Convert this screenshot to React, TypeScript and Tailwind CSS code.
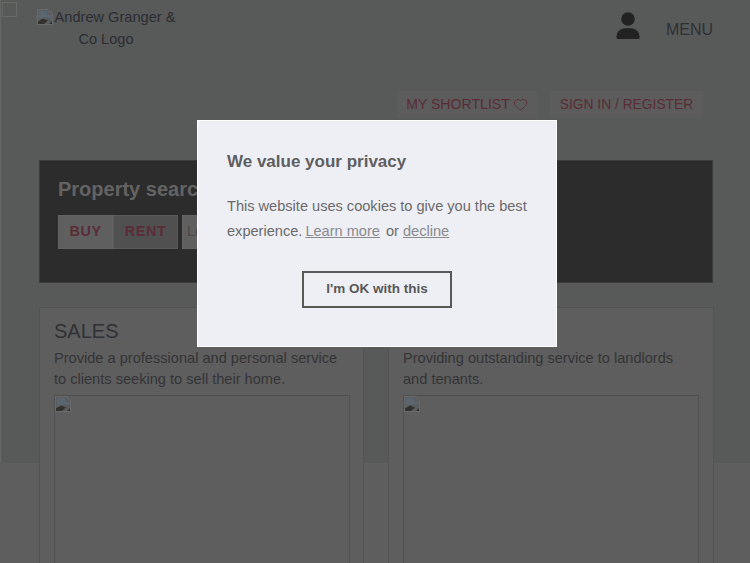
import { Heart } from 'lucide-react'

const font = { fontFamily: '"Liberation Sans", Arial, sans-serif' }

// Chrome's broken image placeholder
function BrokenImage() {
  return (
    <svg width="16" height="16" viewBox="0 0 16 16" className="block shrink-0">
      <path d="M0.5 0.5H11L15.5 5V15.5H0.5Z" fill="#5a5d60" stroke="#6a6a6c" />
      <path d="M2 2H10V6H14V9L9 8L2 10Z" fill="#5a6670" />
      <path d="M1 15V12.5L6 9.5L11 11.5L7 15Z" fill="#33312d" />
      <path d="M12 15L15 12V15Z" fill="#33312d" />
    </svg>
  )
}

function PersonIcon() {
  return (
    <svg width="24" height="27" viewBox="0 0 24 27" className="block">
      <circle cx="12" cy="7" r="6.8" fill="#222222" />
      <path d="M0.5 25C0.5 19 5 16 12 16C19 16 23.5 19 23.5 25C23.5 26.5 23 27 22 27H2C1 27 0.5 26.5 0.5 25Z" fill="#222222" />
    </svg>
  )
}

function ServiceCard({ title, text }: { title: string; text: string }) {
  return (
    <div className="h-[300px] border border-[#535353] bg-[#5e5e5e] px-[14px] pt-[10px]">
      <h2 className="text-[20px] leading-[26px] text-[#2f3135]">{title}</h2>
      <p className="mt-[4px] text-[14.6px] leading-[21px] text-[#343436]">{text}</p>
      <div className="mt-[5px] h-[200px] w-[296px] border border-[#505050]">
        <BrokenImage />
      </div>
    </div>
  )
}

export default function App() {
  return (
    <div
      className="relative h-[563px] w-[750px] overflow-hidden bg-[linear-gradient(#575a59_463px,#5e5e5e_463px)]"
      style={font}
    >
      <div className="h-[463px] w-px bg-[#666866]" />
      <div className="-mt-[463px] pl-[39px] pr-[37px]">
        {/* header */}
        <div className="flex h-[91px] items-start justify-between">
          <div className="-ml-[6px] mt-[6px] w-[146px] text-center text-[14.6px] leading-[22px] text-[#2c2d33]">
            <span className="mr-[2px] inline-block align-[-3px]">
              <BrokenImage />
            </span>
            Andrew Granger &amp; Co Logo
          </div>
          <div className="flex items-start">
            <div className="mr-[26px] mt-[12px]">
              <PersonIcon />
            </div>
            <div className="mt-[20px] text-[16px] leading-[20px] text-[#2f3036]">MENU</div>
          </div>
        </div>

        {/* account links */}
        <div className="flex h-[69px] items-start justify-end gap-[13px] pr-[10px]">
          <div className="flex h-[27px] w-[140px] items-center justify-center gap-[3px] bg-[#5c5c5c] text-[14.1px] text-[#5a2c36]">
            MY SHORTLIST <Heart size={15} strokeWidth={1.4} />
          </div>
          <div className="flex h-[27px] w-[153px] items-center justify-center bg-[#5c5c5c] pt-px text-[13.8px] text-[#5a2c36]">
            SIGN IN / REGISTER
          </div>
        </div>

        {/* search panel */}
        <div className="h-[123px] w-[674px] border border-[#3c3c3c] bg-[#2c2c2c] pl-[18px] pt-[16px]">
          <div className="text-[20px] font-bold leading-[24px] text-[#636363]">Property search</div>
          <div className="mt-[14px] flex h-[34px]">
            <div className="flex w-[55px] items-center justify-center border border-[#636363] bg-[#5f5f5f] text-[14.4px] font-bold tracking-[0.6px] text-[#5a2c36]">
              BUY
            </div>
            <div className="flex w-[65px] items-center justify-center border border-[#5a5a5a] bg-[#505050] text-[14.4px] font-bold tracking-[0.6px] text-[#5a2c36]">
              RENT
            </div>
            <div className="ml-[4px] flex w-[300px] items-center border border-[#636363] bg-[#5f5f5f] pl-[4px] text-[14.4px] text-[#504644]">
              Location
            </div>
          </div>
        </div>

        {/* service cards */}
        <div className="mt-[24px] grid w-[675px] grid-cols-[325px_326px] gap-[24px]">
          <ServiceCard title="SALES" text="Provide a professional and personal service to clients seeking to sell their home." />
          <ServiceCard title="LETTINGS" text="Providing outstanding service to landlords and tenants." />
        </div>
      </div>

      {/* checkbox left over in the corner */}
      <div className="absolute left-[2px] top-[2px] h-[15px] w-[15px] border border-[#686a68]" />

      {/* cookie dialog */}
      <div className="absolute left-[197px] top-[120px] h-[227px] w-[360px] border border-white bg-[#eeeff5] pl-[29px] pr-[25px] pt-[30px]">
        <h2 className="text-[17px] font-bold leading-[22px] text-[#5e5e5e]">We value your privacy</h2>
        <p className="mt-[21px] text-[14.6px] leading-[25px] tracking-[-0.01px] text-[#6a6a6a]">
          This website uses cookies to give you the best experience.{' '}
          <a className="-ml-[1px] text-[#8a8a8e] underline">Learn more</a>
          <span className="ml-[6px]">or </span>
          <a className="text-[#8a8a8e] underline">decline</a>
        </p>
        <div className="-ml-[4px] mt-[27px] flex justify-center">
          <button className="h-[37px] w-[150px] border-2 border-[#585858] text-[13.5px] font-bold text-[#585858]">
            I'm OK with this
          </button>
        </div>
      </div>
    </div>
  )
}
